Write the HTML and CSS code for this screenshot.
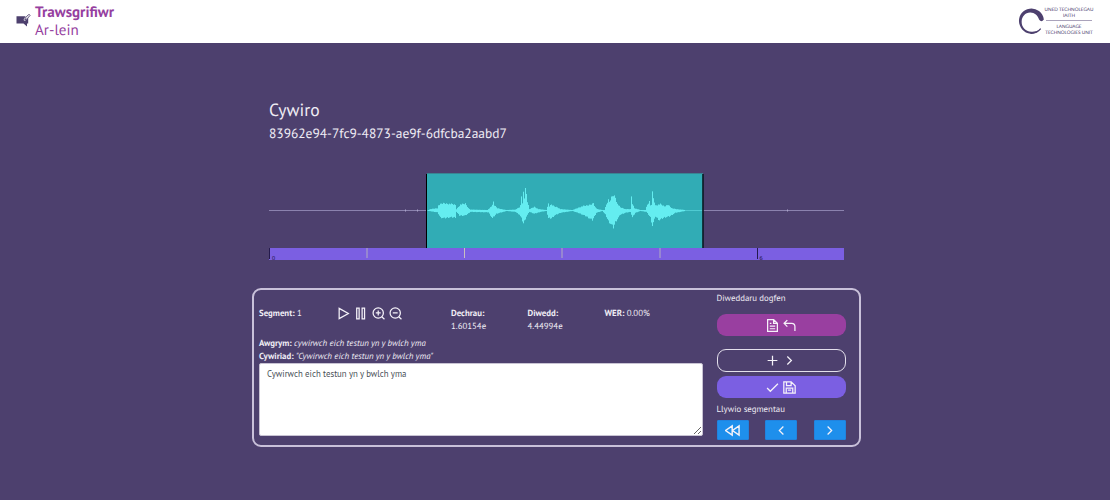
FILE: index.html
```html
<!DOCTYPE html>
<html lang="cy">
<head>
<meta charset="utf-8">
<title>Trawsgrifiwr Ar-lein</title>
<link rel="stylesheet" href="styles.css">
</head>
<body>
<header class="topbar">
  <div class="brand">
    <svg class="brand-icon" viewBox="0 0 15 15"><path d="M.500 3.200h9.200l-2 3 .3 1.500 1.800-.4 2.400-2.500V10.600H11v3L7.500 10.600h-7z" fill="#4d406e"/><path d="M8.800 6.800l.5-1.800 3-3.200q1.300-.8 1.800.5l-3 3.600-2.300.9z" fill="#fff" stroke="#4d406e" stroke-width=".9"/></svg>
    <div class="brand-name"><span class="brand-main">Trawsgrifiwr</span><span class="brand-sub">Ar-lein</span></div>
  </div>
  <div class="unit">
    <svg class="unit-ring" viewBox="0 0 28 28"><path d="M23.500 22A12.300 12.300 0 0 1 13 26.800" fill="none" stroke="#4d406e" stroke-width="1.200"/><path d="M26.800 12.500A13 13 0 0 0 12 1.200C5 2 1 8 1 14c0 6 5 12.800 12 13.200q6 0 11-5.500-5 4-10 3.500C7 24.200 3.600 20 3.800 14.500 4 9.500 7.500 5.500 12.500 5.300c4.500-.2 8 3 9.300 7.200q2.500 3.500 5 0z" fill="#4d406e"/></svg>
    <div class="unit-text"><span>UNED TECHNOLEGAU</span><span>IAITH</span><i class="unit-rule"></i><span>LANGUAGE</span><span>TECHNOLOGIES UNIT</span></div>
  </div>
</header>
<main class="page">
  <h1 class="title">Cywiro</h1>
  <h2 class="subtitle">83962e94-7fc9-4873-ae9f-6dfcba2aabd7</h2>
  <svg class="wave" viewBox="269 173 575 87">
    <path d="M269 210.500H844" stroke="#8b82ae"/>
    <path d="M405 210.500h1M417 210.500h1M787 210.500h1" stroke="#aaa2c8" stroke-width="2"/>
    <rect x="427" y="173" width="276" height="75" fill="#31acb5"/>
    <path d="M427 173.500H703" stroke="#398592"/>
    <path d="M427 210.500H703" stroke="#4fcbd2"/>
    <path d="M426.500 174V248" stroke="#000"/><path d="M703 174V248" stroke="#0b1a22" stroke-width="1.600"/>
    <path id="samples" stroke="#64edf0"/>
    <rect x="269" y="248" width="575" height="12" fill="#7b5fe2"/>
    <path d="M269.500 248v11M757.500 248v11" stroke="#241a4d"/>
    <path d="M367 248v10M562 248v10M660 248v10" stroke="#a69bc9" stroke-width="1.300"/>
    <path d="M464.500 248v10" stroke="#c8bfc0"/>
    <text x="272" y="259.500" class="tick">0</text><text x="759.500" y="259.500" class="tick">6</text>
  </svg>
  <section class="editor">
    <div class="segment">
      <div class="meta">
        <div><b>Segment:</b> 1</div>
        <div class="controls">
          <svg class="ico" viewBox="0 0 24 24"><path d="M4 2.500l17 9.500-17 9.500z"/></svg>
          <svg class="ico" viewBox="0 0 24 24"><path d="M5 2h4.500v20H5zM15 2h4.500v20H15z"/></svg>
          <svg class="ico" viewBox="0 0 24 24"><circle cx="11.500" cy="11" r="9.500"/><path d="M18 18l5 4.500M7 11h9M11.500 6.500v9"/></svg>
          <svg class="ico" viewBox="0 0 24 24"><circle cx="11.500" cy="11" r="9.500"/><path d="M18 18l5 4.500M7 11h9"/></svg>
        </div>
        <div><b>Dechrau:</b><br>1.60154e</div>
        <div><b>Diwedd:</b><br>4.44994e</div>
        <div><b>WER:</b> 0.00%</div>
      </div>
      <div class="line"><b>Awgrym:</b> <em>cywirwch eich testun yn y bwlch yma</em></div>
      <div class="line"><b>Cywiriad:</b> <em>"Cywirwch eich testun yn y bwlch yma"</em></div>
      <textarea class="input">Cywirwch eich testun yn y bwlch yma</textarea>
    </div>
    <aside class="actions">
      <div class="label">Diweddaru dogfen</div>
      <button class="pill pill-doc">
        <svg class="ico" viewBox="0 0 24 24"><path d="M3 1h11l7 7v15H3zM14 1v7h7M7 8h3M7 13h10M7 18h10"/></svg>
        <svg class="ico" viewBox="0 0 24 24"><path d="M8 2L2 8l6 6M2 8h14q6 0 6 6v8"/></svg>
      </button>
      <button class="pill pill-add">
        <svg class="ico" viewBox="0 0 24 24"><path d="M12 3v18M3 12h18"/></svg>
        <svg class="ico" viewBox="0 0 24 24"><path d="M8 4.500l7.500 7.500L8 19.500"/></svg>
      </button>
      <button class="pill pill-save">
        <svg class="ico" viewBox="0 0 24 24"><path d="M2 13l6 6L22 5"/></svg>
        <svg class="ico" viewBox="0 0 24 24"><path d="M1.500 1.500H15l7.500 7.500v13.500h-21zM6.500 2v6.500H15V2M6 22v-9h12v9M9 17h6"/></svg>
      </button>
      <div class="label label-nav">Llywio segmentau</div>
      <div class="nav">
        <button class="step"><svg class="ico wide" viewBox="0 0 24 24"><path d="M11.500 4.500v15L1 12zM22.500 4.500v15L12 12z"/></svg></button>
        <button class="step"><svg class="ico" viewBox="0 0 24 24"><path d="M15.500 4.500L8 12l7.500 7.500"/></svg></button>
        <button class="step"><svg class="ico" viewBox="0 0 24 24"><path d="M8.500 4.500L16 12l-7.500 7.500"/></svg></button>
      </div>
    </aside>
  </section>
</main>
<script src="wave.js"></script>
</body>
</html>
```
FILE: wave.js
```js
// Envelope key points: [x, y, x, y, ...]
const top_ = [428,210,430,209,433,208.5,437,208,438,205,441,203,444,202.5,446,203,452,203.5,455,204.5,456,209,460,204,465,203,468,208,470,209.500,487,210,489,208,491,206,493,201,494,205,497,208,501,209,506,210,515,209.500,519,207,520,205,521,195,522,202,523,191,524,197,525,183,526,193,527,201,529,209,534,206.500,538,209,546,210,547,206,548,203,549,206,551,204,554,206,557,207,560,209,572,210,579,207,583,205.500,587,205,590,204,592,203,593,202,594,206,597,209,602,210,604,210,606,204,608,199,609,201,611,196,613,193,615,196,616,202,620,207,625,209,630,209,631,195,632,203,634,208,640,210,645,210,646,206,649,201,650,205,651,204,652,191,653,197,655,205,660,203.500,664,206,668,204,671,208,676,209,685,210];
const bottom = [428,211,437,212.500,440,218,444,219,448,218,455,218,456,212,459,216,465,216,470,212,488,212.500,492,219,496,214,503,212,506,211,515,212,519,215,521,219,523,224.500,526,217,529,212,534,214,540,212,546,211,548,219,551,219,554,216,560,213,572,211,580,214,586,217,592,221,596,213,602,211,605,215,608,222,611,226,613,229,615,223,620,215,625,213,630,212,632,218,635,213,640,211,646,212,650,218,652,227,655,217,659,221,664,218,669,217,675,213,685,211];
function at(points, x) {
  for (let i = 0; i < points.length - 2; i += 2) {
    if (x <= points[i + 2]) {
      const t = (x - points[i]) / (points[i + 2] - points[i]);
      return points[i + 1] + t * (points[i + 3] - points[i + 1]);
    }
  }
  return points[points.length - 1];
}
let d = "";
for (let x = 428; x < 685; x++) {
  const k = 1 - ((x * 37) % 11) / 55;
  const y1 = 210.5 - (210.5 - at(top_, x)) * k;
  const y2 = 210.5 + (at(bottom, x) - 210.5) * (1 - ((x * 23) % 7) / 35);
  d += `M${x + 0.5} ${y1.toFixed(2)}V${y2.toFixed(2)}`;
}
document.getElementById("samples").setAttribute("d", d);
```
FILE: styles.css
```css
* { box-sizing: border-box; }
body { margin: 0; height: 500px; overflow: hidden; background: #4d406e; color: #f0edf5; font-family: "PT Sans", "Noto Sans", sans-serif; font-size: 8.8px; line-height: 13px; text-rendering: geometricPrecision; }
.topbar { height: 43px; background: #fff; display: flex; justify-content: space-between; padding: 4px 17px 0 16px; }
.brand { display: flex; gap: 4px; color: #963fa0; }
.brand-icon { width: 15px; height: 15px; margin-top: 9px; }
.brand-name { display: flex; flex-direction: column; font-size: 15.100px; line-height: 18px; }
.brand-main { font-weight: 700; }
.unit { display: flex; color: #4d406e; }
.unit-ring { width: 27px; height: 28px; margin-top: 3px; }
.unit-text { width: 48px; display: flex; flex-direction: column; align-items: center; font: 4.700px/6px Lato, sans-serif; padding-top: 2px; white-space: nowrap; }
.unit-rule { width: 46px; height: 1px; background: #aaa3bb; margin: 2px 0; }
.page { width: 609px; margin-left: 252px; padding-top: 55px; }
.title { margin: 0 0 0 17px; font-size: 17.600px; line-height: 23px; font-weight: 400; }
.subtitle { margin: 1px 0 0 17px; font-size: 13.450px; line-height: 22px; font-weight: 400; }
.wave { display: block; width: 575px; height: 87px; margin: 29px 0 28px 17px; }
.tick { font: 5.500px "Noto Sans", sans-serif; fill: #1b1240; }
.editor { height: 159px; border: 2px solid #c9c1da; border-radius: 9px; display: flex; justify-content: space-between; padding: 0 13.500px 0 5px; }
.segment { width: 444px; padding-top: 17px; }
.meta { display: grid; grid-template-columns: 77.500px 114.500px 76.500px 77px 1fr; height: 30px; }
.controls { display: flex; gap: 4.500px; }
.ico { display: block; width: 13px; height: 13px; fill: none; stroke: #f5f2f9; stroke-width: 2.300; flex: none; }
.wide { width: 15px; height: 15px; }
.line { line-height: 13px; }
.input { display: block; width: 444px; height: 73px; border: 1px solid #c8c3d3; border-radius: 2px; padding: 3px 7px; font: inherit; color: #495057; background: #fff; margin: 0; }
.actions { width: 129px; padding-top: 2px; }
.pill { display: flex; align-items: center; justify-content: center; gap: 4px; width: 129px; height: 22px; border: 0; border-radius: 9px; padding: 0; }
.pill-doc { background: #993fa0; margin-top: 9px; }
.pill-add { background: transparent; border: 1px solid #e4e0ec; margin-top: 13px; height: 23px; }
.pill-save { background: #7b5fe2; margin-top: 4px; }
.label-nav { margin-top: 5px; }
.nav { display: flex; justify-content: space-between; margin-top: 4px; }
.step { width: 32px; height: 20px; border: 1px solid #2183df; border-radius: 1px; background: #1e8fec; display: flex; align-items: center; justify-content: center; padding: 0; }
```
